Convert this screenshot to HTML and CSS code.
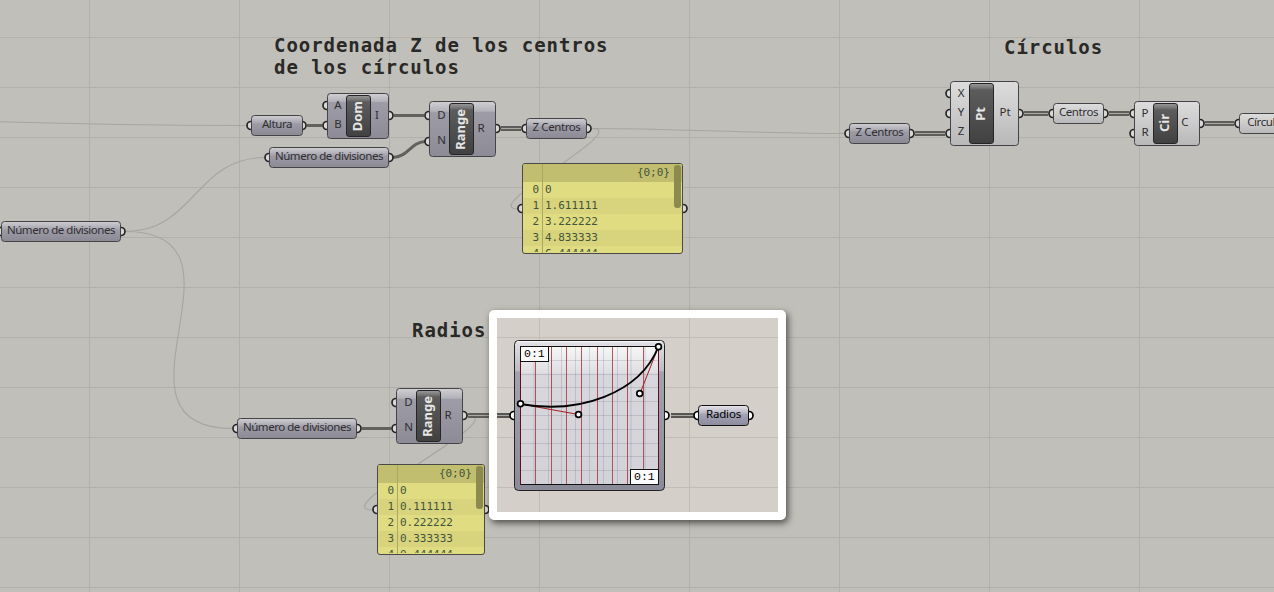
FILE: index.html
```html
<!DOCTYPE html>
<html lang="es">
<head>
<meta charset="utf-8">
<title>Definición</title>
<link rel="stylesheet" href="styles.css">
</head>
<body>
<main class="canvas">
  <svg class="wires" width="1274" height="592">
    <g class="faint">
      <path d="M0 121.8C70 124 160 125.5 247 125.5"/>
      <path d="M125 231.5C195 231.5 195 157.5 265 157.5"/>
      <path d="M125 231.5C265 231.5 93 428.5 233 428.5"/>
      <path d="M592 128.5C633 128.5 477 209 518 209"/>
      <path d="M592 128.5C675 128.5 760 133.5 845 133.5"/>
      <path d="M467 415.5C517 415.5 323 510 373 510"/>
    </g>
    <g class="single">
      <path d="M307 125.5H322"/>
      <path d="M394 115.5H424"/>
      <path d="M393 157.5C409 156.500 410 142.500 425 141.5"/>
      <path d="M362 428.5H391"/>
    </g>
    <g class="double"><path d="M501 128.5H521M915 133.5H945M1024 113.5H1048M1109 113.5H1129M1205 123.5H1234M468 415.5H510"/></g>
    <g class="core"><path d="M501 128.5H521M915 133.5H945M1024 113.5H1048M1109 113.5H1129M1205 123.5H1234M468 415.5H510"/></g>
    <g class="grips">
      <circle cx="251" cy="125.500" r="4"/><circle cx="302" cy="125.500" r="4"/>
      <circle cx="327" cy="105.500" r="4"/><circle cx="327" cy="125.500" r="4"/><circle cx="389" cy="115.500" r="4"/>
      <circle cx="269" cy="157.500" r="4"/><circle cx="389" cy="157.500" r="4"/>
      <circle cx="429" cy="115.500" r="4"/><circle cx="429" cy="141.500" r="4"/><circle cx="496" cy="128.500" r="4"/>
      <circle cx="526" cy="128.500" r="4"/><circle cx="587" cy="128.500" r="4"/>
      <circle cx="522" cy="208.500" r="4"/><circle cx="683" cy="208.500" r="4"/>
      <circle cx="1" cy="231.500" r="4"/><circle cx="121" cy="231.500" r="4"/>
      <circle cx="849" cy="133.500" r="4"/><circle cx="910" cy="133.500" r="4"/>
      <circle cx="950" cy="93.500" r="4"/><circle cx="950" cy="113.500" r="4"/><circle cx="950" cy="133.500" r="4"/><circle cx="1019" cy="113.500" r="4"/>
      <circle cx="1053" cy="113.500" r="4"/><circle cx="1104" cy="113.500" r="4"/>
      <circle cx="1134" cy="113.500" r="4"/><circle cx="1134" cy="133.500" r="4"/><circle cx="1200" cy="123.500" r="4"/>
      <circle cx="1239" cy="123.500" r="4"/>
      <circle cx="237" cy="428.500" r="4"/><circle cx="357" cy="428.500" r="4"/>
      <circle cx="396" cy="402.500" r="4"/><circle cx="396" cy="428.500" r="4"/><circle cx="463" cy="415.500" r="4"/>
      <circle cx="377" cy="509.500" r="4"/><circle cx="485" cy="509.500" r="4"/>
    </g>
  </svg>

  <h2 class="title t-coord">Coordenada Z de los centros<br>de los círculos</h2>
  <h2 class="title t-circ">Círculos</h2>
  <h2 class="title t-rad">Radios</h2>

  <div class="param violet n-altura"><span>Altura</span></div>
  <div class="param violet long n-num1"><span>Número de divisiones</span></div>
  <div class="param violet long n-num0"><span>Número de divisiones</span></div>
  <div class="param violet long n-num2"><span>Número de divisiones</span></div>
  <div class="param violet n-zc1"><span>Z Centros</span></div>
  <div class="param violet n-zc2"><span>Z Centros</span></div>
  <div class="param grey n-centros"><span>Centros</span></div>
  <div class="param grey n-circulos"><span>Círculos</span></div>

  <section class="comp violet n-dom">
    <div class="ports"><span>A</span><span>B</span></div>
    <div class="badge"><b>Dom</b></div>
    <div class="ports out"><span>I</span></div>
  </section>
  <section class="comp violet n-range1">
    <div class="ports"><span>D</span><span>N</span></div>
    <div class="badge"><b>Range</b></div>
    <div class="ports out"><span>R</span></div>
  </section>
  <section class="comp violet n-range2">
    <div class="ports"><span>D</span><span>N</span></div>
    <div class="badge"><b>Range</b></div>
    <div class="ports out"><span>R</span></div>
  </section>
  <section class="comp grey n-pt">
    <div class="ports"><span>X</span><span>Y</span><span>Z</span></div>
    <div class="badge"><b>Pt</b></div>
    <div class="ports out"><span>Pt</span></div>
  </section>
  <section class="comp grey n-cir">
    <div class="ports"><span>P</span><span>R</span></div>
    <div class="badge"><b>Cir</b></div>
    <div class="ports out"><span>C</span></div>
  </section>

  <section class="panel n-panel1">
    <header>{0;0}</header>
    <div class="row"><i>0</i><span>0</span></div>
    <div class="row"><i>1</i><span>1.611111</span></div>
    <div class="row"><i>2</i><span>3.222222</span></div>
    <div class="row"><i>3</i><span>4.833333</span></div>
    <div class="row last"><i>4</i><span>6.444444</span></div>
    <div class="thumb"></div>
  </section>
  <section class="panel n-panel2">
    <header>{0;0}</header>
    <div class="row"><i>0</i><span>0</span></div>
    <div class="row"><i>1</i><span>0.111111</span></div>
    <div class="row"><i>2</i><span>0.222222</span></div>
    <div class="row"><i>3</i><span>0.333333</span></div>
    <div class="row last"><i>4</i><span>0.444444</span></div>
    <div class="thumb"></div>
  </section>

  <section class="focus">
    <svg class="graph" width="281" height="194" viewBox="497 318 281 194">
      <defs>
        <linearGradient id="body" x1="0" y1="0" x2="0" y2="1">
          <stop offset="0" stop-color="#e2e2e6"/><stop offset=".2" stop-color="#bcbbc6"/>
          <stop offset=".21" stop-color="#a3a2b0"/><stop offset="1" stop-color="#8b8a99"/>
        </linearGradient>
        <linearGradient id="plot" x1="0" y1="0" x2="0" y2="1">
          <stop offset="0" stop-color="#f7f7f8"/><stop offset=".19" stop-color="#dfdee3"/>
          <stop offset=".2" stop-color="#d8d7de"/><stop offset="1" stop-color="#d2d2d8"/>
        </linearGradient>
      </defs>
      <g class="double bright"><path d="M497 415.5H510M671 415.500H694"/></g>
      <g class="core"><path d="M497 415.5H510M671 415.500H694"/></g>
      <g class="grips bright">
        <circle cx="514" cy="415.500" r="4"/><circle cx="665" cy="415.500" r="4"/>
        <circle cx="698" cy="415.500" r="4"/><circle cx="749" cy="415.500" r="4"/>
      </g>
      <rect x="514.500" y="340.500" width="150" height="150" rx="4" fill="url(#body)" stroke="#242424" stroke-width="1"/>
      <path d="M517 341.700H662" stroke="#fff" opacity=".8"/>
      <rect x="520" y="346" width="139" height="139" fill="url(#plot)"/>
      <path class="mesh" d="M520 360.500H659M520 374.500H659M520 387.500H659M520 401.500H659M520 415.500H659M520 429.500H659M520 443.500H659M520 456.500H659M520 470.500H659M534 346V485M548.500 346V485M561.500 346V485M575.500 346V485M589.500 346V485M603.500 346V485M617.500 346V485M631 346V485M645 346V485"/>
      <path class="bars" d="M535.500 346V485M551.500 346V485M566.500 346V485M581.500 346V485M597.500 346V485M612.500 346V485M627.500 346V485M643.500 346V485"/>
      <path d="M520 346.500H659M520 484.500H659" stroke="#111"/>
      <path d="M520.500 346V485M658.500 346V485" stroke="#6b0c12"/>
      <path d="M520.500 404L578.500 414.500M658.500 346.500L640 393.500" stroke="#a41e22" stroke-width="1"/>
      <path d="M520.500 404C578.500 414.500 640 393.500 658.500 346.500" stroke="#000" stroke-width="1.900" fill="none"/>
      <g fill="#fafafa" stroke="#111">
        <rect x="520.500" y="346.500" width="28" height="15"/>
        <rect x="630.500" y="469.500" width="28" height="15"/>
      </g>
      <g class="domain"><text x="524" y="357">0:1</text><text x="634" y="480">0:1</text></g>
      <g fill="#fff" stroke="#000" stroke-width="1.700">
        <circle cx="520.500" cy="403.700" r="2.900"/><circle cx="578.500" cy="414.500" r="2.900"/>
        <circle cx="639.700" cy="393.500" r="2.900"/><circle cx="658.500" cy="346.700" r="2.900"/>
      </g>
    </svg>
    <div class="param violet vivid n-radios"><span>Radios</span></div>
  </section>
</main>
</body>
</html>
```

FILE: styles.css
```css
* { box-sizing: border-box; }
body { margin: 0; background: #c1bfb9; }

.canvas {
  position: relative;
  width: 1274px;
  height: 592px;
  overflow: hidden;
  background-color: #c1bfb9;
  background-image:
    linear-gradient(90deg, #b2b0aa 1px, transparent 1px),
    linear-gradient(#b2b0aa 1px, transparent 1px);
  background-size: 150px 50px;
  background-position: 89px 37px;
  font-family: "Noto Sans", sans-serif;
  color: #302e31;
}

.wires { position: absolute; left: 0; top: 0; }
.faint path { fill: none; stroke: #a7a5a0; stroke-width: 1.1; }
.single path { fill: none; stroke: #62615e; stroke-width: 3; }
.double path { fill: none; stroke: #5e5d5a; stroke-width: 5; }
.core path { fill: none; stroke: #aaa8a3; stroke-width: 1.2; }
.double.bright path { stroke: #575452; }
.grips circle { fill: #d8d7d4; stroke: #252525; stroke-width: 1.7; }
.grips.bright circle { fill: #fff; stroke: #000; }

.title {
  position: absolute;
  margin: 0;
  font: bold 19px/22px "DejaVu Sans Mono", monospace;
  letter-spacing: .95px;
  color: #292927;
  white-space: nowrap;
}
.t-coord { left: 274px; top: 34px; }
.t-circ { left: 1004px; top: 36px; }
.t-rad { left: 412px; top: 319px; }

.param, .comp {
  position: absolute;
  border: 1px solid #444347;
  border-radius: 3.5px;
}
.param {
  display: flex;
  align-items: center;
  justify-content: center;
  height: 21px;
  font-size: 11.5px;
  letter-spacing: -.4px;
  line-height: 16px;
  white-space: nowrap;
}
.param span { padding-bottom: 3px; }
.param.long { width: 120px; letter-spacing: -.47px; }
.violet { background: linear-gradient(#cdccd0, #a8a7b0 36%, #9c9ba5 42%, #8b8a95); }
.grey { background: linear-gradient(#dcdcdc, #cbcbcb 50%, #b8b8b8); }
.comp.violet { background: linear-gradient(#cfced1, #b3b2b8 17%, #9d9ca7 19%, #8c8b96); }
.param.vivid { border-color: #111; color: #000; background: linear-gradient(#e4e3e8, #b6b5c3 38%, #a5a4b5 42%, #8d8c9e); letter-spacing: -.15px; }

.comp { display: flex; font-size: 11.5px; padding: 1px; }
.ports {
  flex: 1;
  display: flex;
  flex-direction: column;
  padding-bottom: 3px;
}
.ports span { flex: 1; display: flex; align-items: center; justify-content: center; line-height: 12px; }
.out { padding-right: 6px; }
.n-dom .out { padding-right: 4px; }
.n-pt .out { padding-right: 1px; }
.comp .ports:first-child { flex: 0 0 17px; padding-left: 1px; }
.badge {
  flex: 0 0 25px;
  display: flex;
  align-items: center;
  justify-content: center;
  padding-right: 3px;
  border: 1px solid #252525;
  border-radius: 3px;
  background: linear-gradient(#969696, #747474 4px, #5c5c5c 6px, #414141);
  color: #e6e6e4;
  font-size: 13px;
  line-height: 16px;
}
.badge b { writing-mode: vertical-rl; transform: rotate(180deg); }

.n-altura { left: 251px; top: 115px; width: 52px; }
.n-num1 { left: 269px; top: 147px; }
.n-num0 { left: 1px; top: 221px; }
.n-num2 { left: 237px; top: 418px; }
.n-zc1 { left: 526px; top: 118px; width: 61px; }
.n-zc2 { left: 849px; top: 123px; width: 61px; }
.n-centros { left: 1053px; top: 103px; width: 51px; }
.n-circulos { left: 1239px; top: 113px; width: 56px; }
.n-dom { left: 327px; top: 93px; width: 62px; height: 46px; }
.n-range1 { left: 429px; top: 101px; width: 67px; height: 56px; }
.n-range2 { left: 396px; top: 388px; width: 67px; height: 56px; }
.n-pt { left: 950px; top: 81px; width: 69px; height: 65px; }
.n-cir { left: 1134px; top: 101px; width: 66px; height: 45px; }
.n-range1 .ports:first-child, .n-range2 .ports:first-child { flex-basis: 18px; padding-left: 3px; }

.panel {
  position: absolute;
  height: 91px;
  overflow: hidden;
  border: 1px solid #494945;
  border-radius: 3px;
  background: #dfdc82;
  color: #44543a;
  font: 11px/16px "DejaVu Sans Mono", monospace;
}
.panel header {
  height: 18px;
  padding: 1px 12px 0 0;
  background: #c2be70;
  text-align: right;
}
.row { display: flex; height: 16px; }
.row:nth-child(odd) { background: #d8d47d; }
.row.last { height: 6px; overflow: hidden; }
.row i {
  width: 20px;
  padding-right: 4px;
  font-style: normal;
  text-align: right;
}
.row span { padding-left: 2px; }
.panel::after {
  content: "";
  position: absolute;
  left: 19px;
  top: 0;
  width: 1px;
  height: 100%;
  background: #aaa761;
}
.thumb {
  position: absolute;
  right: 1px;
  top: 1px;
  width: 7px;
  height: 43px;
  border-radius: 3px;
  background: #8d8a50;
}
.n-panel1 { left: 522px; top: 163px; width: 161px; }
.n-panel2 { left: 377px; top: 464px; width: 108px; }

/* Highlighted area of the canvas */
.focus {
  position: absolute;
  left: 489px;
  top: 310px;
  width: 297px;
  height: 210px;
  border: 8px solid #fff;
  border-radius: 5px;
  background-color: #d4cfc8;
  background-image:
    linear-gradient(90deg, #c1bdb6 1px, transparent 1px),
    linear-gradient(#c1bdb6 1px, transparent 1px);
  background-size: 150px 50px;
  background-position: 42px 19px;
  box-shadow: 2px 3px 7px rgba(0, 0, 0, .6);
}
.graph { display: block; }
.mesh { fill: none; stroke: #6b6b78; stroke-opacity: .22; }
.bars { stroke: #a83b40; stroke-opacity: .85; }
.domain { font: 11.5px "Liberation Mono", monospace; fill: #000; }
.n-radios { left: 201px; top: 87px; width: 51px; }
```
